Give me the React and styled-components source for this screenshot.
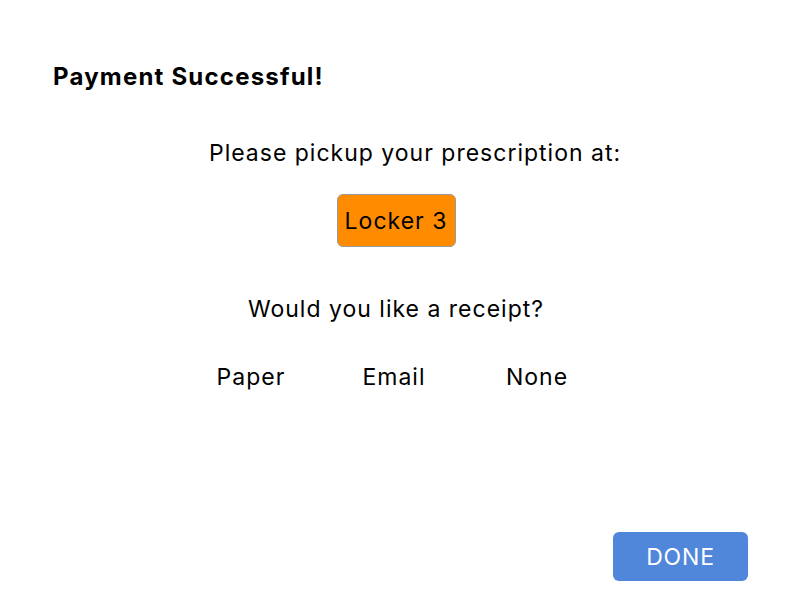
import React from 'react'
import styled, { createGlobalStyle } from 'styled-components'

const GlobalStyle = createGlobalStyle`
  body {
    margin: 0;
    background: #ffffff;
    font-family: Inter, 'Noto Sans', sans-serif;
    color: #000;
  }
`

const Screen = styled.div`
  width: 792px;
  height: 612px;
  box-sizing: border-box;
  padding: 60px 44px 31px 53px;
  display: flex;
  flex-direction: column;
`

const Title = styled.h1`
  margin: 0;
  font-size: 24px;
  line-height: 34px;
  font-weight: 700;
  letter-spacing: 1.2px;
`

const Body = styled.div`
  display: flex;
  flex-direction: column;
  align-items: center;
  margin-left: -53px;
  margin-right: -44px;
  flex: 1;
`

const Prompt = styled.p`
  margin: ${p => p.$top}px 0 0;
  padding-left: ${p => p.$shift || 0}px;
  font-size: 23px;
  line-height: 30px;
  letter-spacing: 1px;
`

const Locker = styled.div`
  margin-top: 26px;
  width: 119px;
  height: 53px;
  box-sizing: border-box;
  display: flex;
  align-items: center;
  justify-content: center;
  background: #ff8c00;
  border: 1px solid #9a9a9a;
  border-radius: 6px;
  font-size: 23px;
  letter-spacing: 1px;
`

const Options = styled.div`
  margin-top: 38px;
  display: grid;
  grid-template-columns: repeat(3, 143px);
  justify-items: center;
  margin-left: -4px;
`

const Option = styled.button`
  background: none;
  border: none;
  padding: 0;
  font-family: inherit;
  font-size: 23px;
  line-height: 30px;
  letter-spacing: 1px;
  color: #000;
  cursor: pointer;
`

const Footer = styled.div`
  display: flex;
  justify-content: flex-end;
`

const DoneButton = styled.button`
  width: 135px;
  height: 49px;
  border: none;
  border-radius: 6px;
  background: #5087db;
  color: #fff;
  font-family: inherit;
  font-size: 23px;
  letter-spacing: 0.8px;
  cursor: pointer;
`

export default function App() {
  return (
    <>
      <GlobalStyle />
      <Screen>
        <Title>Payment Successful!</Title>
        <Body>
          <Prompt $top={44} $shift={38}>Please pickup your prescription at:</Prompt>
          <Locker>Locker 3</Locker>
          <Prompt $top={47}>Would you like a receipt?</Prompt>
          <Options>
            <Option>Paper</Option>
            <Option>Email</Option>
            <Option>None</Option>
          </Options>
        </Body>
        <Footer>
          <DoneButton>DONE</DoneButton>
        </Footer>
      </Screen>
    </>
  )
}
